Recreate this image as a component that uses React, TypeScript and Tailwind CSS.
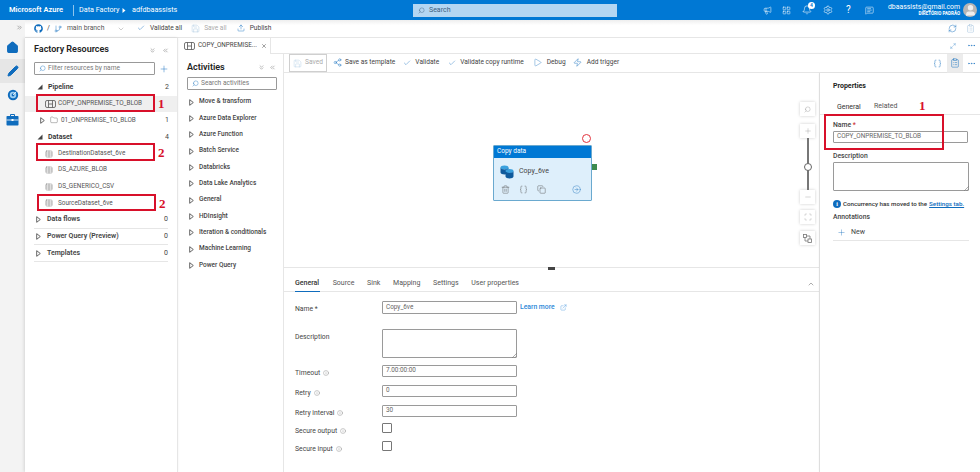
import React from "react";
import {
  Search, Plus, ChevronsDown, ChevronsLeft, ChevronsRight, ChevronDown, ChevronUp, X, Check, Play, Save, Share2, Zap, Braces,
  Table, Folder, Trash2, Copy, Megaphone, Bell, Settings, MessageSquareText, Info, ExternalLink, RefreshCw,
  ClipboardList, Maximize2, MoreHorizontal, Upload, GitBranch, Minus, Scan, LayoutGrid, CircleArrowRight,
  Pencil, House, User,
} from "lucide-react";
import { FaGithub } from "react-icons/fa";

const Caret = ({ open }: { open?: boolean }) =>
  open ? (
    <svg width="6" height="6" viewBox="0 0 6 6" className="shrink-0"><path d="M5.5 0.5V5.5H0.5Z" fill="#444" /></svg>
  ) : (
    <svg width="5" height="7" viewBox="0 0 5 7" className="shrink-0"><path d="M0.7 0.7L4.3 3.5L0.7 6.3Z" fill="#fff" stroke="#555" strokeWidth="0.9" /></svg>
  );

const PipeIcon = () => (
  <svg width="11" height="8" viewBox="0 0 11 8" fill="none" stroke="#555" strokeWidth="0.8" className="shrink-0">
    <rect x="0.5" y="0.5" width="10" height="7" rx="1.5" />
    <path d="M3.5 0.5V7.5M7.5 0.5V7.5M3.5 4H7.5" />
  </svg>
);

const Num = ({ children }: { children: React.ReactNode }) => (
  <span className="absolute left-[100%] ml-[5px] top-[-1px] text-[13px] leading-[18px] font-bold text-[#d8102a] font-['Liberation_Serif',serif]">
    {children}
  </span>
);

const DataRow = ({ label, mark, box }: { label: string; mark?: string; box?: string }) => (
  <div className="h-[16.6px] flex items-center pl-[20px] text-[6.4px] text-[#555] relative">
    {mark && (
      <div className={`absolute w-[119px] border-2 border-[#d8102a] ${box}`}>
        <Num>{mark}</Num>
      </div>
    )}
    <Table size={8} strokeWidth={1.3} className="text-[#666] mr-[5px] shrink-0" />
    {label}
  </div>
);

const activities = [
  "Move & transform", "Azure Data Explorer", "Azure Function", "Batch Service", "Databricks", "Data Lake Analytics",
  "General", "HDInsight", "Iteration & conditionals", "Machine Learning", "Power Query",
];

const Tool = ({ icon, label, cls }: { icon: React.ReactNode; label: string; cls: string }) => (
  <div className={`flex items-center gap-[5px] ${cls}`}>
    {icon}
    <span className="text-[6.6px] text-[#444]">{label}</span>
  </div>
);

const Zoomer = ({ children }: { children: React.ReactNode }) => (
  <div className="w-[15px] h-[14px] bg-white shadow-[0_0_3px_rgba(0,0,0,0.2)] flex items-center justify-center text-[#888]">{children}</div>
);

const FormRow = ({ label, info, children, cls }: { label: string; info?: boolean; children?: React.ReactNode; cls: string }) => (
  <div className={`flex items-start ${cls}`}>
    <div className="w-[87px] flex items-center gap-[3px] text-[6.8px] text-[#444] pt-[3px]">
      {label}
      {info && <Info size={6} strokeWidth={1.3} className="text-[#666]" />}
    </div>
    {children}
  </div>
);

const Input = ({ v, cls = "h-[12px]" }: { v?: string; cls?: string }) => (
  <div className={`w-[135px] border border-[#9a9a9a] rounded-[1px] px-[3px] text-[6.4px] text-[#666] flex items-center ${cls}`}>{v}</div>
);

const Grip = () => (
  <svg width="6" height="6" viewBox="0 0 6 6" className="absolute right-0 bottom-0" stroke="#777" strokeWidth="0.6"><path d="M1 6L6 1M3.5 6L6 3.5" /></svg>
);

export default function App() {
  return (
    <div className="w-[980px] h-[472px] overflow-hidden flex flex-col bg-white whitespace-nowrap font-['Roboto',sans-serif] text-[#333]">
      {/* header */}
      <header className="h-[20px] shrink-0 bg-[#0078d4] flex items-center text-white relative">
        <div className="w-[413px] flex items-center">
          <span className="ml-[9px] w-[55px] text-[7.5px] font-semibold">Microsoft Azure</span>
          <span className="ml-[9px] w-px h-[11px] bg-[#8ec4ec]" />
          <span className="ml-[5px] w-[39px] text-[7.2px]">Data Factory</span>
          <svg width="4" height="5" viewBox="0 0 4 5" className="ml-[4px]"><path d="M0.5 0L3.5 2.5L0.5 5Z" fill="#fff" /></svg>
          <span className="ml-[6px] text-[7.2px]">adfdbaassists</span>
        </div>
        <div className="w-[204px] h-[13px] bg-[#b3d6f2] flex items-center pl-[5px] text-[7px] text-[#3a5f80] gap-[4px]">
          <Search size={7} strokeWidth={1.4} className="-scale-x-100" /> Search
        </div>
        <div className="ml-[146px] flex items-center">
          <Megaphone size={9} strokeWidth={1.4} />
          <LayoutGrid size={9} strokeWidth={1.4} className="ml-[10px]" />
          <span className="relative ml-[11px]">
            <Bell size={10} strokeWidth={1.4} />
            <span className="absolute -top-[3px] -right-[3px] w-[7px] h-[7px] rounded-full bg-white text-[#0078d4] text-[5px] font-bold flex items-center justify-center">4</span>
          </span>
          <Settings size={10} strokeWidth={1.4} className="ml-[11px]" />
          <span className="ml-[13px] w-[6px] text-[10px] leading-none">?</span>
          <MessageSquareText size={9} strokeWidth={1.4} className="ml-[13px]" />
        </div>
        <div className="ml-auto flex flex-col items-end leading-none">
          <span className="text-[6.9px]">dbaassists@gmail.com</span>
          <span className="text-[4.5px] font-bold mt-[1px]">DIRETÓRIO PADRÃO</span>
        </div>
        <span className="ml-[3px] mr-[3px] w-[14px] h-[14px] rounded-full bg-[#b5b5b5] flex items-center justify-center overflow-hidden">
          <User size={13} fill="#eee" stroke="#eee" />
        </span>
      </header>

      <div className="flex-1 flex min-h-0">
        {/* nav */}
        <nav className="w-[25px] shrink-0 bg-[#f3f3f3] flex flex-col items-center">
          <ChevronsRight size={7} strokeWidth={1.4} className="mt-[4px] ml-[13px] text-[#444]" />
          <House size={13} fill="#0f6cbd" stroke="#0f6cbd" className="mt-[10px]" />
          <div className="mt-[5px] w-[25px] h-[24px] bg-[#e6e6e6] flex items-center justify-center">
            <Pencil size={12} fill="#0f6cbd" stroke="#0f6cbd" />
          </div>
          <svg width="12" height="12" viewBox="0 0 12 12" className="mt-[6px]">
            <circle cx="6" cy="6" r="5.2" fill="#0f6cbd" />
            <circle cx="6" cy="6" r="3.2" fill="#9fd0f2" />
            <circle cx="6" cy="6" r="1.4" fill="#0f6cbd" />
            <path d="M6 6L9.5 2.5" stroke="#fff" strokeWidth="0.8" />
          </svg>
          <svg width="13" height="13" viewBox="0 0 13 13" className="mt-[12px]">
            <path d="M4.5 3V1.5H8.5V3" fill="none" stroke="#0f6cbd" strokeWidth="1" />
            <rect x="0.5" y="3" width="12" height="9.5" rx="0.8" fill="#0f6cbd" />
            <path d="M0.5 7H12.5" stroke="#fff" strokeWidth="0.8" />
            <rect x="5.5" y="6" width="2" height="2" fill="#fff" />
          </svg>
        </nav>

        <div className="flex-1 min-w-0 flex flex-col">
          {/* top toolbar */}
          <div className="h-[18px] shrink-0 border-b border-[#e6e6e6] flex items-center pl-[9px] pr-[5px] bg-gradient-to-b from-[#eeeeee] to-white to-[30%]">
            <FaGithub size={9} className="text-[#0f6cbd]" />
            <span className="ml-[4px] text-[7px] text-[#444]">/</span>
            <GitBranch size={8} strokeWidth={1.3} className="ml-[4px] text-[#0f6cbd]" />
            <span className="ml-[5px] w-[36px] text-[6.8px] text-[#555]">main branch</span>
            <ChevronDown size={8} strokeWidth={1} className="ml-[14px] text-[#666]" />
            <Tool cls="ml-[12px]" icon={<Check size={8} strokeWidth={1.3} className="text-[#0f6cbd]" />} label="Validate all" />
            <div className="ml-[9px] flex items-center gap-[4px]">
              <Save size={9} strokeWidth={1.2} className="text-[#a8c6e0]" />
              <span className="text-[6.6px] text-[#aaa]">Save all</span>
            </div>
            <Tool cls="ml-[10px]" icon={<Upload size={8} strokeWidth={1.3} className="text-[#0f6cbd]" />} label="Publish" />
            <RefreshCw size={9} strokeWidth={1.2} className="ml-auto text-[#0f6cbd]" />
            <ClipboardList size={9} strokeWidth={1.2} className="ml-[9px] text-[#9bbcd8]" />
          </div>

          <div className="flex-1 min-h-0 flex">
            {/* factory resources */}
            <aside className="w-[153px] shrink-0 border-r border-[#e6e6e6] shadow-[-1px_0_3px_rgba(0,0,0,0.12)] pl-[9px] pr-[8px] relative">
              <div className="flex items-center h-[24px]">
                <span className="text-[9px] font-semibold text-[#222]">Factory Resources</span>
                <ChevronsDown size={7} strokeWidth={1.3} className="ml-auto text-[#444]" />
                <ChevronsLeft size={7} strokeWidth={1.3} className="ml-[6px] text-[#444]" />
              </div>
              <div className="flex items-center">
                <div className="w-[121px] h-[13px] border border-[#999] rounded-[1px] flex items-center pl-[4px] gap-[2px] text-[6.6px] text-[#777]">
                  <Search size={7} strokeWidth={1.3} className="-scale-x-100 text-[#0f6cbd]" /> Filter resources by name
                </div>
                <Plus size={10} strokeWidth={1.1} className="ml-[4px] text-[#0f6cbd]" />
              </div>
              <div className="-ml-[9px] -mr-[8px] mt-[4px] flex flex-col">
                <div className="h-[16.6px] flex items-center pl-[12px] pr-[8px]">
                  <span className="w-[9px]"><Caret open /></span>
                  <span className="ml-[2px] font-semibold text-[7px]">Pipeline</span>
                  <span className="ml-auto text-[7px] text-[#444]">2</span>
                </div>
                <div className="h-[16.6px] bg-[#efefef] relative flex items-center pl-[20px] text-[6.4px] text-[#555]">
                  <div className="absolute left-[11px] top-[-2px] w-[119px] h-[18px] border-2 border-[#d8102a]"><Num>1</Num></div>
                  <PipeIcon /><span className="ml-[2px]">COPY_ONPREMISE_TO_BLOB</span>
                </div>
                <div className="h-[16.6px] flex items-center pl-[15px] pr-[8px] text-[6.4px] text-[#555]">
                  <Caret />
                  <Folder size={8} strokeWidth={1.2} className="ml-[5px] mr-[3px] text-[#555]" />
                  01_ONPREMISE_TO_BLOB
                  <span className="ml-auto text-[7px] text-[#444]">1</span>
                </div>
                <div className="h-[16.6px] flex items-center pl-[12px] pr-[8px]">
                  <span className="w-[9px]"><Caret open /></span>
                  <span className="ml-[2px] font-semibold text-[7px]">Dataset</span>
                  <span className="ml-auto text-[7px] text-[#444]">4</span>
                </div>
                <DataRow label="DestinationDataset_6ve" mark="2" box="left-[11px] top-[-2px] h-[18px]" />
                <DataRow label="DS_AZURE_BLOB" />
                <DataRow label="DS_GENERICO_CSV" />
                <DataRow label="SourceDataset_6ve" mark="2" box="left-[12px] top-[-1px] h-[17px]" />
                {["Data flows", "Power Query (Preview)", "Templates"].map((s) => (
                  <div key={s} className="mx-[9px] h-[16.8px] border-b border-[#e6e6e6] flex items-center pl-[2px]">
                    <span className="w-[9px]"><Caret /></span>
                    <span className="ml-[2px] font-semibold text-[7px] text-[#444]">{s}</span>
                    <span className="ml-auto text-[7px] text-[#444]">0</span>
                  </div>
                ))}
              </div>
            </aside>

            <div className="flex-1 min-w-0 flex flex-col">
              {/* tab strip */}
              <div className="h-[16px] shrink-0 flex border-b border-[#e6e6e6]">
                <div className="w-[93px] h-[16px] bg-white border-r border-[#e6e6e6] flex items-center pl-[6px] text-[6.3px] text-[#444]">
                  <PipeIcon />
                  <span className="ml-[3px] w-[58px]">COPY_ONPREMISE...</span>
                  <X size={6} className="ml-[5px]" />
                </div>
                <div className="ml-auto flex items-center pr-[4px] gap-[11px] text-[#0f6cbd]">
                  <Maximize2 size={6} strokeWidth={1.2} />
                  <MoreHorizontal size={9} strokeWidth={1.4} />
                </div>
              </div>

              <div className="flex-1 min-h-0 flex">
                {/* activities */}
                <aside className="w-[106px] shrink-0 border-r border-[#e6e6e6] pl-[9px] pr-[7px]">
                  <div className="flex items-center h-[23px] pt-[4px]">
                    <span className="text-[9px] font-semibold text-[#222]">Activities</span>
                    <ChevronsDown size={7} strokeWidth={1.3} className="ml-auto text-[#555]" />
                    <ChevronsLeft size={7} strokeWidth={1.3} className="ml-[4px] text-[#555]" />
                  </div>
                  <div className="w-[90px] h-[13px] border border-[#999] rounded-[1px] flex items-center pl-[4px] gap-[2px] text-[6.6px] text-[#777]">
                    <Search size={7} strokeWidth={1.3} className="-scale-x-100 text-[#0f6cbd]" /> Search activities
                  </div>
                  <div className="mt-[4px] flex flex-col">
                    {activities.map((a) => (
                      <div key={a} className="h-[16.35px] flex items-center gap-[5px] pl-[2px] text-[6.5px] text-[#444] font-medium">
                        <Caret />{a}
                      </div>
                    ))}
                  </div>
                </aside>

                <div className="flex-1 min-w-0 flex flex-col">
                  {/* pipeline toolbar */}
                  <div className="h-[19px] shrink-0 border-b border-[#e6e6e6] flex items-center pl-[5px] pr-[3px]">
                    <div className="w-[38px] h-[18px] border border-[#cfcfcf] flex items-center justify-center gap-[3px]">
                      <Save size={9} strokeWidth={1.2} className="text-[#b5cfe6]" />
                      <span className="text-[6.6px] text-[#aaa]">Saved</span>
                    </div>
                    <Tool cls="ml-[6px] !gap-[3px]" icon={<Share2 size={9} strokeWidth={1.2} className="text-[#0f6cbd]" />} label="Save as template" />
                    <Tool cls="ml-[8px] !gap-[4px]" icon={<Check size={8} strokeWidth={1.2} className="text-[#0f6cbd]" />} label="Validate" />
                    <Tool cls="ml-[9px] !gap-[4px]" icon={<Check size={8} strokeWidth={1.2} className="text-[#0f6cbd]" />} label="Validate copy runtime" />
                    <Tool cls="ml-[9px]" icon={<Play size={9} strokeWidth={1} className="text-[#0f6cbd]" />} label="Debug" />
                    <Tool cls="ml-[7px]" icon={<Zap size={9} strokeWidth={1.2} className="text-[#0f6cbd]" />} label="Add trigger" />
                    <Braces size={9} strokeWidth={1.2} className="ml-auto text-[#0f6cbd]" />
                    <div className="ml-[5px] w-[16px] h-[19px] bg-[#ececec] flex items-center justify-center">
                      <ClipboardList size={10} strokeWidth={1.2} className="text-[#0f6cbd]" />
                    </div>
                    <MoreHorizontal size={9} strokeWidth={1.4} className="ml-[4px] mr-[1px] text-[#0f6cbd]" />
                  </div>

                  <div className="flex-1 min-h-0 flex">
                    <div className="flex-1 min-w-0 flex flex-col border-r border-[#e6e6e6]">
                      {/* canvas */}
                      <div className="h-[195px] shrink-0 relative border-b border-[#e6e6e6]">
                        <span className="absolute left-[298px] top-[61px] w-[9px] h-[9px] rounded-full border border-[#e2333d] bg-white" />
                        <div className="absolute left-[209px] top-[72px] w-[99px] h-[56px] border border-[#6aa9cf] rounded-[1px] bg-[#deeffb] flex flex-col">
                          <div className="h-[12px] bg-[#0078d4] text-white text-[6.5px] flex items-center pl-[3px]">Copy data</div>
                          <div className="flex items-center pl-[6px] mt-[6px] gap-[5px]">
                            <svg width="14" height="15" viewBox="0 0 14 14">
                              <ellipse cx="4.5" cy="3" rx="4" ry="2" fill="#3aa0dd" />
                              <path d="M0.5 3V8C0.5 9 2.5 10 4.5 10S8.5 9 8.5 8V3C8.5 4 6.5 5 4.5 5S0.5 4 0.5 3Z" fill="#0f5a9c" />
                              <ellipse cx="9.5" cy="6.5" rx="4" ry="2" fill="#3aa0dd" />
                              <path d="M5.5 6.5V12C5.5 13 7.5 14 9.5 14S13.5 13 13.5 12V6.5C13.5 7.5 11.5 8.5 9.5 8.5S5.5 7.5 5.5 6.5Z" fill="#0f5a9c" />
                            </svg>
                            <span className="text-[7px] text-[#444]">Copy_6ve</span>
                          </div>
                          <div className="mt-[6px] flex items-center pl-[7px] text-[#555]">
                            <Trash2 size={9} strokeWidth={1.2} />
                            <Braces size={9} strokeWidth={1.2} className="ml-[9px]" />
                            <Copy size={9} strokeWidth={1.2} className="ml-[9px]" />
                            <CircleArrowRight size={9} strokeWidth={1.2} className="ml-[26px] text-[#2b7cc0]" />
                          </div>
                        </div>
                        <span className="absolute left-[308px] top-[91px] w-[5px] h-[6px] bg-[#3d8b4e]" />
                        {/* zoom controls */}
                        <div className="absolute left-[516px] top-[29px] flex flex-col items-center">
                          <Zoomer><Search size={7} strokeWidth={1.2} className="-scale-x-100" /></Zoomer>
                          <div className="mt-[8px]"><Zoomer><Plus size={8} strokeWidth={1} /></Zoomer></div>
                          <div className="w-[2px] h-[52px] bg-[#777] relative">
                            <span className="absolute left-[-3px] top-[25px] w-[8px] h-[8px] rounded-full border border-[#666] bg-white" />
                          </div>
                          <Zoomer><Minus size={8} strokeWidth={1} /></Zoomer>
                          <div className="mt-[6px]"><Zoomer><Scan size={8} strokeWidth={1.1} /></Zoomer></div>
                          <div className="mt-[7px]">
                            <Zoomer>
                              <svg width="9" height="9" viewBox="0 0 9 9" fill="none" stroke="#777" strokeWidth="0.8">
                                <rect x="0.5" y="0.5" width="3" height="3" />
                                <rect x="5" y="5" width="3.5" height="3.5" />
                                <path d="M2 3.5V7H5M3.5 2H7V5" />
                              </svg>
                            </Zoomer>
                          </div>
                        </div>
                      </div>
                      {/* bottom */}
                      <div className="flex-1 min-h-0 relative pl-[11px]">
                        <span className="absolute left-[264px] -top-[1px] w-[7px] h-[3px] bg-[#444]" />
                        <div className="-ml-[11px] pl-[11px] h-[24px] flex items-end border-b border-[#e6e6e6] text-[7px] text-[#555] gap-[12.7px] relative">
                          <span className="w-[25px] h-[14px] border-b-[1.5px] border-[#0f6cbd] text-[#333] font-medium -mb-px">General</span>
                          <span className="h-[13px]">Source</span>
                          <span className="h-[13px]">Sink</span>
                          <span className="h-[13px]">Mapping</span>
                          <span className="h-[13px]">Settings</span>
                          <span className="h-[13px]">User properties</span>
                          <ChevronUp size={8} strokeWidth={1.2} className="absolute right-[4px] top-[12px] text-[#333]" />
                        </div>
                        <FormRow cls="mt-[9px] h-[28px]" label="Name *">
                          <Input v="Copy_6ve" cls="h-[13px]" />
                          <span className="ml-[3px] mt-[1px] text-[6.8px] text-[#2b88d8] flex items-center gap-[5px] font-medium">Learn more <ExternalLink size={7} strokeWidth={1.2} /></span>
                        </FormRow>
                        <FormRow cls="h-[36px]" label="Description">
                          <div className="relative"><Input cls="h-[29px]" /><Grip /></div>
                        </FormRow>
                        <FormRow cls="h-[20px]" label="Timeout" info><Input v="7.00:00:00" /></FormRow>
                        <FormRow cls="h-[20px]" label="Retry" info><Input v="0" /></FormRow>
                        <FormRow cls="h-[18px]" label="Retry interval" info><Input v="30" /></FormRow>
                        <FormRow cls="h-[18px]" label="Secure output" info>
                          <span className="w-[10px] h-[10px] border border-[#777] rounded-[1px]" />
                        </FormRow>
                        <FormRow cls="h-[18px]" label="Secure input" info>
                          <span className="w-[10px] h-[10px] border border-[#777] rounded-[1px]" />
                        </FormRow>
                      </div>
                    </div>

                    {/* properties */}
                    <aside className="w-[160px] shrink-0 relative pl-[13px] pr-[11px] shadow-[-1px_0_2px_rgba(0,0,0,0.05)]">
                      <div className="absolute left-[4px] top-[41px] w-[120px] h-[36px] border-2 border-[#d8102a]" />
                      <span className="absolute left-[99px] top-[24px] text-[13px] leading-[18px] font-bold text-[#d8102a] font-['Liberation_Serif',serif]">1</span>
                      <div className="pt-[8px] h-[23px] text-[7px] font-bold text-[#222]">Properties</div>
                      <div className="-ml-[13px] -mr-[11px] pl-[17px] h-[19px] border-b border-[#e6e6e6] flex items-end gap-[12px] text-[7px] text-[#555]">
                        <span className="w-[25px] h-[13px] border-b-[1.5px] border-[#0f6cbd] text-[#333] -mb-px">General</span>
                        <span className="h-[13px]">Related</span>
                      </div>
                      <div className="mt-[5px] text-[6.8px] font-medium text-[#444] leading-[10px]">Name <span className="text-[#c33]">*</span></div>
                      <div className="mt-[1px]"><Input v="COPY_ONPREMISE_TO_BLOB" /></div>
                      <div className="mt-[8px] text-[6.8px] font-medium text-[#444] leading-[10px]">Description</div>
                      <div className="mt-[1px] relative w-[136px]"><Input cls="h-[29px] !w-[136px]" /><Grip /></div>
                      <div className="mt-[8px] flex items-center gap-[2px] text-[6.2px] font-medium text-[#333] leading-[10px]">
                        <span className="w-[8px] h-[8px] shrink-0 rounded-full bg-[#0f6cbd] text-white text-[6px] font-bold flex items-center justify-center font-['Liberation_Serif',serif]">i</span>
                        Concurrency has moved to the <span className="text-[#0f6cbd] underline">Settings tab.</span>
                      </div>
                      <div className="mt-[3px] text-[6.8px] font-medium text-[#444] leading-[10px]">Annotations</div>
                      <div className="mt-[4px] border-b border-[#e6e6e6] flex items-center gap-[5px] pl-[4px] text-[7px] text-[#444] h-[15px] pb-[1px]">
                        <Plus size={9} strokeWidth={1} className="text-[#0f6cbd]" /> New
                      </div>
                    </aside>
                  </div>
                </div>
              </div>
            </div>
          </div>
        </div>
      </div>
    </div>
  );
}
